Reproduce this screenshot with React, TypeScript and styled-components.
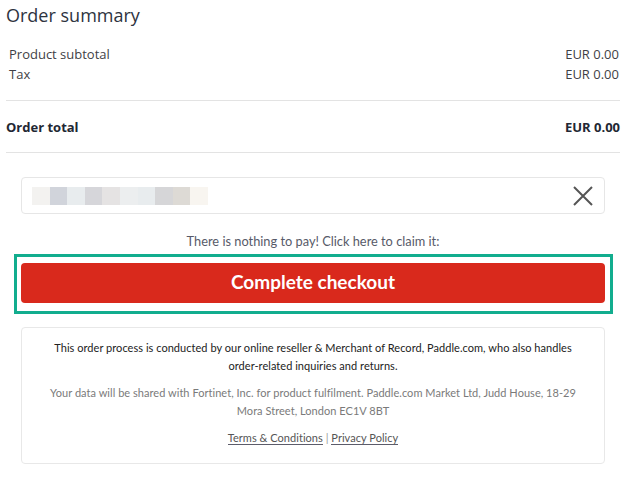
import React from "react";
import styled, { createGlobalStyle } from "styled-components";

const Global = createGlobalStyle`
  html, body { margin: 0; padding: 0; background: #fff; }
  body { font-family: "Open Sans", "Liberation Sans", sans-serif; }
`;

const Page = styled.div`
  width: 614px;
  padding: 0 11px 0 6px;
`;

const Title = styled.h2`
  margin: 0;
  padding-top: 3px;
  height: 33px;
  font-size: 18px;
  line-height: 24px;
  font-weight: 400;
  color: #2d3340;
  font-family: "Open Sans", "Liberation Sans", sans-serif;
`;

const Lines = styled.div`
  padding: 8px 1px 16px 3px;
  border-bottom: 1px solid #e3e3e3;
`;

const Row = styled.div<{ $bold?: boolean }>`
  display: flex;
  justify-content: space-between;
  font-size: 13px;
  line-height: 20px;
  color: ${(p) => (p.$bold ? "#222733" : "#3f3f46")};
  font-weight: ${(p) => (p.$bold ? 700 : 400)};
`;

const TotalBlock = styled.div`
  padding: 16px 0 15px;
  border-bottom: 1px solid #e3e3e3;
`;

const Checkout = styled.div`
  padding: 24px 15px 0;
  font-family: Lato, "Liberation Sans", sans-serif;
`;

const InputBox = styled.div`
  height: 35px;
  border: 1px solid #e6e6e6;
  border-radius: 4px;
  display: flex;
  align-items: center;
  padding: 0 10px;
  justify-content: space-between;
`;

const Blur = styled.div`
  display: flex;
`;

const Tile = styled.span<{ $c: string }>`
  width: 17.6px;
  height: 18px;
  background: ${(p) => p.$c};
`;

const ClearIcon = styled.svg`
  width: 22px;
  height: 22px;
  display: block;
`;

const Hint = styled.p`
  margin: 19px 0 5px;
  text-align: center;
  font-size: 12.8px;
  line-height: 16px;
  color: #575a68;
`;

const Focus = styled.div`
  margin: 0 -8px 0 -7px;
  border: 3px solid #12ad8e;
  padding: 6px 5px 8px 4px;
`;

const PayButton = styled.button`
  display: block;
  width: 100%;
  height: 40px;
  border: 0;
  border-radius: 4px;
  background: #d9291c;
  color: #fff;
  font-family: Lato, "Liberation Sans", sans-serif;
  font-weight: 700;
  font-size: 19px;
  padding: 0 0 3px;
  cursor: pointer;
`;

const Notice = styled.div`
  margin-top: 13px;
  border: 1px solid #e8e8e8;
  border-radius: 4px;
  padding: 11px 20px 16px;
  text-align: center;
  font-size: 11px;
  line-height: 18px;
  letter-spacing: 0.04px;
`;

const NoticeText = styled.p<{ $muted?: boolean }>`
  margin: 0 0 9px;
  color: ${(p) => (p.$muted ? "#7a7a7a" : "#222")};
`;

const Links = styled.div`
  color: #999;
  font-size: 11px;
  line-height: 18px;
`;

const Link = styled.a`
  color: #555;
  text-decoration: none;
  border-bottom: 1px solid #5c5c6a;
`;

const tiles = [
  "#f3f2f0",
  "#d1d4db",
  "#e8ecee",
  "#d6d6da",
  "#e5e3e3",
  "#eceeef",
  "#e8ecee",
  "#d6d6d8",
  "#dddad5",
  "#f8f5f0",
];

export default function App() {
  return (
    <>
      <Global />
      <Page>
        <Title>Order summary</Title>
        <Lines>
          <Row>
            <span>Product subtotal</span>
            <span>EUR 0.00</span>
          </Row>
          <Row>
            <span>Tax</span>
            <span>EUR 0.00</span>
          </Row>
        </Lines>
        <TotalBlock>
          <Row $bold>
            <span>Order total</span>
            <span>EUR 0.00</span>
          </Row>
        </TotalBlock>
        <Checkout>
          <InputBox>
            <Blur>
              {tiles.map((c, i) => (
                <Tile key={i} $c={c} />
              ))}
            </Blur>
            <ClearIcon viewBox="0 0 22 22">
              <path d="M2 2 L20 20 M20 2 L2 20" stroke="#555" strokeWidth="2" />
            </ClearIcon>
          </InputBox>
          <Hint>There is nothing to pay! Click here to claim it:</Hint>
          <Focus>
            <PayButton>Complete checkout</PayButton>
          </Focus>
          <Notice>
            <NoticeText>
              This order process is conducted by our online reseller &amp; Merchant of Record,
              Paddle.com, who also handles order-related inquiries and returns.
            </NoticeText>
            <NoticeText $muted>
              Your data will be shared with Fortinet, Inc. for product fulfilment. Paddle.com
              Market Ltd, Judd House, 18-29 Mora Street, London EC1V 8BT
            </NoticeText>
            <Links>
              <Link href="#">Terms &amp; Conditions</Link> | <Link href="#">Privacy Policy</Link>
            </Links>
          </Notice>
        </Checkout>
      </Page>
    </>
  );
}
